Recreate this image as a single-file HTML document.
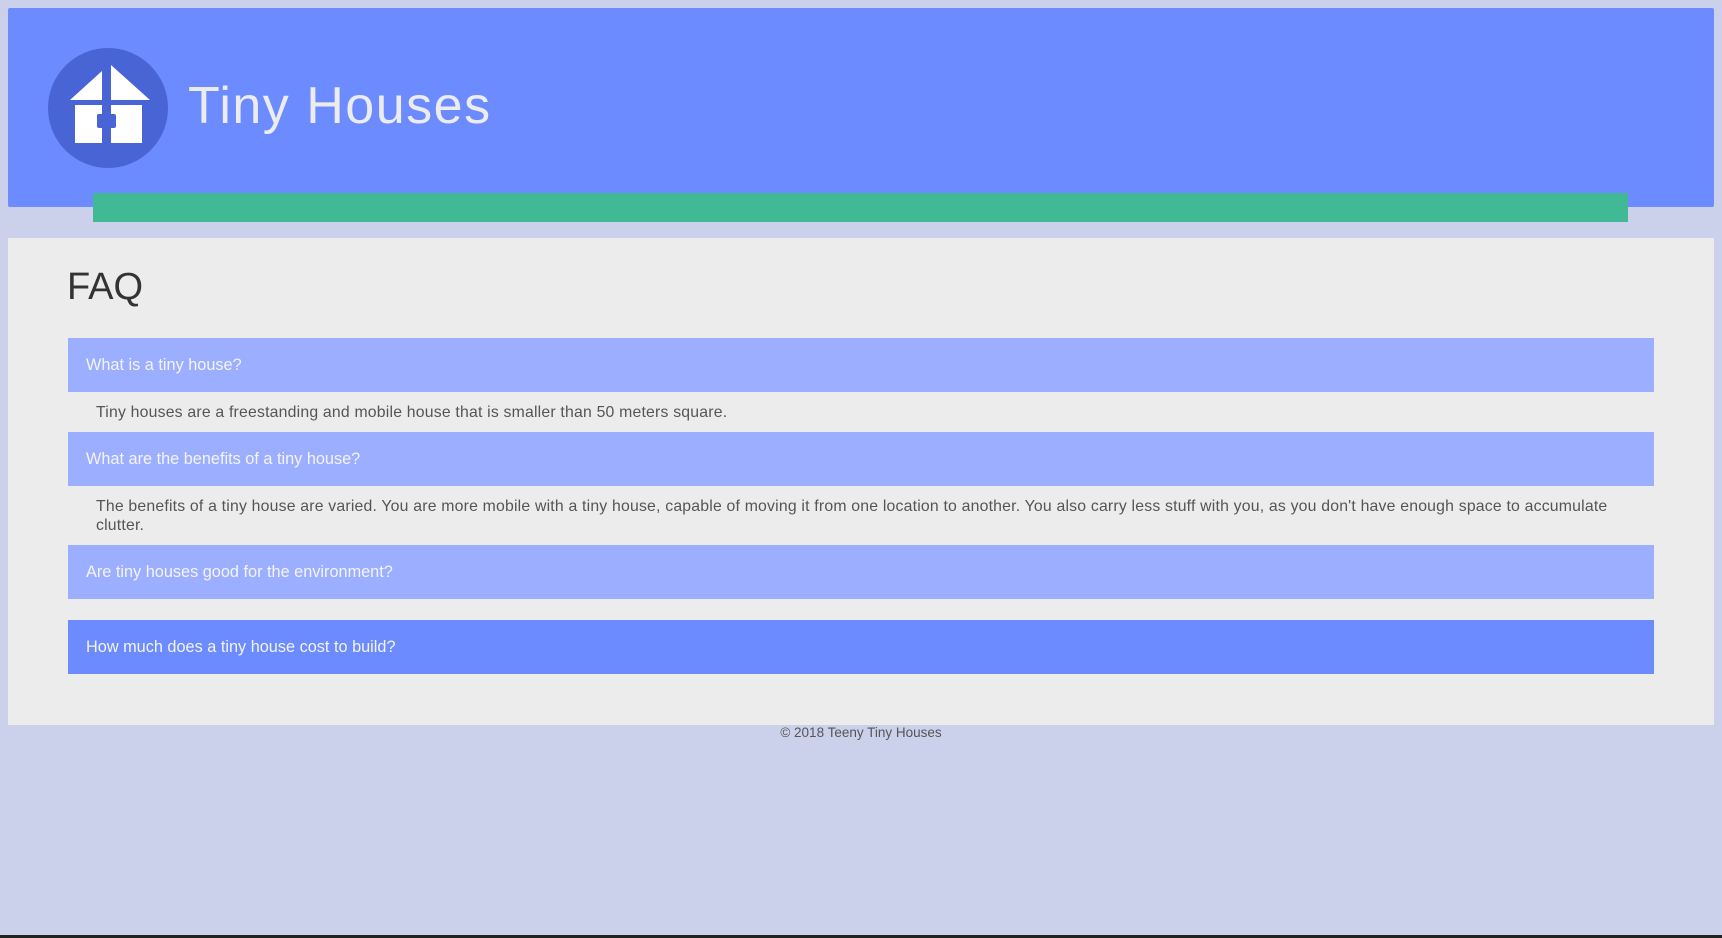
<!DOCTYPE html>
<html><head><meta charset="utf-8"><style>
*{margin:0;padding:0;box-sizing:border-box}
body{width:1722px;height:938px;background:#ccd1eb;font-family:"Liberation Sans",sans-serif;position:relative;overflow:hidden}
.hdr{position:absolute;left:8px;top:8px;width:1706px;height:199px;background:#6b8bff;border-radius:2px}
.green{position:absolute;left:93px;top:193px;width:1535px;height:29px;background:#41b994}
.logo{position:absolute;left:48px;top:48px;width:120px;height:120px;border-radius:50%;background:#4964d4}
.title{position:absolute;left:188px;top:76px;font-size:52px;color:#ececec;letter-spacing:1.5px}
.main{position:absolute;left:8px;top:238px;width:1706px;height:487px;background:#ececec}
h1{position:absolute;left:67px;top:266px;font-size:38px;font-weight:normal;color:#333}
.q{position:absolute;left:68px;width:1586px;height:54px;background:#9caeff;color:#f4f4f4;font-size:16.3px;line-height:54px;padding-left:18px}
.a{position:absolute;left:96px;width:1540px;font-size:15.8px;color:#555;line-height:19px;letter-spacing:.2px}
.foot{position:absolute;left:0;width:1722px;top:725px;text-align:center;font-size:13.5px;color:#555}
.bot{position:absolute;left:0;top:935px;width:1722px;height:3px;background:#222}
</style></head><body>
<div class="hdr"></div>
<div class="logo"><svg width="120" height="120" viewBox="0 0 120 120">
<path d="M22 52 L54 23 L54 52 Z M63 17 L63 52 L102 52 Z" fill="#fff"/>
<path d="M27 57 H54 V66 H50 Q49 66 49 68 V78 Q49 80 51 80 H54 V95 H27 Z" fill="#fff"/>
<path d="M63 57 H94 V95 H63 V80 H66 Q68 80 68 78 V68 Q68 66 66 66 H63 Z" fill="#fff"/>
</svg></div>
<div class="title">Tiny Houses</div>
<div class="green"></div>
<div class="main"></div>
<h1>FAQ</h1>
<div class="q" style="top:338px">What is a tiny house?</div>
<div class="a" style="top:403px">Tiny houses are a freestanding and mobile house that is smaller than 50 meters square.</div>
<div class="q" style="top:432px">What are the benefits of a tiny house?</div>
<div class="a" style="top:497px">The benefits of a tiny house are varied. You are more mobile with a tiny house, capable of moving it from one location to another. You also carry less stuff with you, as you don't have enough space to accumulate<br>clutter.</div>
<div class="q" style="top:545px">Are tiny houses good for the environment?</div>
<div class="q" style="top:620px;background:#6b8bff">How much does a tiny house cost to build?</div>
<div class="foot">© 2018 Teeny Tiny Houses</div>
<div class="bot"></div>
</body></html>
